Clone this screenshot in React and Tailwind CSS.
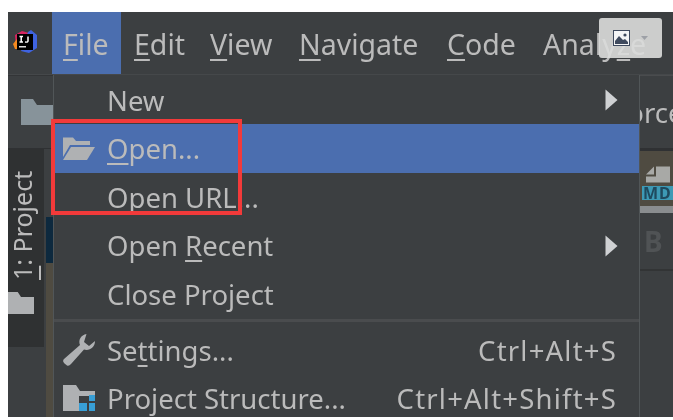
const font = { fontFamily: '"Noto Sans", sans-serif' };

function U({ children }) {
  return <span className="underline decoration-[1.5px] underline-offset-[4px]">{children}</span>;
}

function MenuTop({ children, active, width, pad }) {
  return (
    <div className={`flex h-[62px] items-center whitespace-nowrap pt-[2px] ${pad} ${width} ${active ? "bg-[#4b6eaf]" : ""}`}>
      <span>{children}</span>
    </div>
  );
}

function Row({ icon, children, shortcut, arrow, active, height = "h-[49px]", nudge = "" }) {
  return (
    <div className={`flex ${height} items-center pr-[22px] ${active ? "bg-[#4b6eaf]" : ""}`}>
      <div className="flex w-[53px] shrink-0 items-center justify-center pr-[4px]">{icon}</div>
      <div className={`flex-1 whitespace-nowrap ${nudge}`}>{children}</div>
      {shortcut && <div className={`whitespace-nowrap tracking-[1.2px] ${nudge}`}>{shortcut}</div>}
      {arrow && (
        <svg width="13" height="22" viewBox="0 0 13 22" className="mr-[-1px]">
          <path d="M0.5 0.5 L12.5 11 L0.5 21.5 Z" fill="#cfd1d3" />
        </svg>
      )}
    </div>
  );
}

function Logo() {
  return (
    <svg width="26" height="26" viewBox="0 0 26 26">
      <path d="M3 6 L10 2 L17 4 L12 22 L4 19 Z" fill="#d6245f" />
      <path d="M1 15 L5 10 L8 20 L3 20 Z" fill="#f58a1f" />
      <path d="M16 3 L19 1 L25 6 L25 19 L17 24 L9 22 Z" fill="#3f63e0" />
      <rect x="5" y="5" width="16" height="16" fill="#000" />
      <rect x="7" y="17" width="7" height="1.5" fill="#ddd" />
      <path d="M7.5 7.5 H11 M9.2 7.5 V13 M7.5 13 H11 M16 7.5 V12 Q16 13.5 13 13" stroke="#fff" strokeWidth="1.5" fill="none" />
    </svg>
  );
}

function FolderOpen() {
  return (
    <svg width="34" height="24" viewBox="0 0 34 24">
      <path d="M1 0.5 H11 L14 4 H28 V8 H8 L1 20 Z" fill="#afb1b3" />
      <path d="M9 10 H33 L25 23 H1 Z" fill="#afb1b3" />
    </svg>
  );
}

function Wrench() {
  return (
    <svg width="34" height="34" viewBox="0 0 34 34">
      <path d="M24.5 1 C19 2 16 7 18 12 L2 26 Q0 28 2.5 30.5 L5 32.5 Q7 33.5 9 31 L22 16.5 C27 18 33 15 33 8 L27 13 L22 9 Z" fill="#afb1b3" />
    </svg>
  );
}

function StructureIcon() {
  return (
    <svg width="34" height="28" viewBox="0 0 34 28">
      <path d="M1 0 H14 L18 6 H33 V11 H17 V26 H1 Z" fill="#afb1b3" />
      <rect x="17" y="18" width="8" height="8" fill="#389fd6" />
      <rect x="27" y="18" width="6" height="8" fill="#389fd6" />
      <rect x="27" y="10" width="6" height="6" fill="#389fd6" />
    </svg>
  );
}

function SolidFolder({ w, h, fill }) {
  return (
    <svg width={w} height={h} viewBox="0 0 32 26" preserveAspectRatio="none">
      <path d="M0 0 H12 L16 6 H32 V26 H0 Z" fill={fill} />
    </svg>
  );
}

export default function App() {
  return (
    <div className="relative h-[417px] w-[673px] overflow-hidden bg-white pl-2 pt-3 text-[27.5px] leading-none text-[#bbbbbb] blur-[0.4px]" style={font}>
      <div className="flex h-[405px] flex-col bg-[#3c3f41]">
        <div className="flex h-[63px] shrink-0 border-b border-[#45484a] text-[28.5px]">
          <div className="flex w-[44px] items-center pb-[3px] pl-[4px]"><Logo /></div>
          <MenuTop active width="w-[69px]" pad="pl-[11px]"><U>F</U>ile</MenuTop>
          <MenuTop width="w-[76px]" pad="pl-[13px]"><U>E</U>dit</MenuTop>
          <MenuTop width="w-[88px]" pad="pl-[13px]"><U>V</U>iew</MenuTop>
          <MenuTop width="w-[147px]" pad="pl-[14px]"><U>N</U>avigate</MenuTop>
          <MenuTop width="w-[97px]" pad="pl-[15px]"><U>C</U>ode</MenuTop>
          <MenuTop width="w-[115px]" pad="pl-[14px]">Analy<U>z</U>e</MenuTop>
        </div>
        <div className="flex min-h-0 flex-1">
          <div className="flex w-[45px] shrink-0 flex-col">
            <div className="flex h-[74px] shrink-0 items-center justify-end border-y border-t-[#333537] border-b-[#2f3133]">
              <div className="w-[32px] overflow-hidden"><SolidFolder w={32} h={26} fill="#87939a" /></div>
            </div>
            <div className="flex flex-1">
              <div className="flex h-[198px] w-[36px] flex-col bg-[#2f3132]">
                <div className="ml-[1px] mt-[20px] flex h-[112px] w-[27px] items-center justify-center rotate-180 whitespace-nowrap text-[25px] [writing-mode:vertical-rl]">
                  <span><U>1</U>: Project</span>
                </div>
                <div className="mt-[11px]"><SolidFolder w={26} h={22} fill="#afb1b3" /></div>
              </div>
              <div className="ml-[2px] flex flex-1 flex-col">
                <div className="h-[68px] bg-[#3c3f41]"></div>
                <div className="h-[46px] bg-[#0d293e]"></div>
                <div className="flex-1 bg-[#4f4b41]"></div>
              </div>
            </div>
          </div>
          <div className="w-[587px] shrink-0 border-l border-r border-[#515658] bg-[#3c3f41] pt-[1px]">
            <Row arrow height="h-[48px]" nudge="pt-[2px]">New</Row>
            <Row active icon={<FolderOpen />}><U>O</U>pen...</Row>
            <Row>Open URL...</Row>
            <Row arrow height="h-[47px]">Open <U>R</U>ecent</Row>
            <Row nudge="pt-[2px]">Close Project</Row>
            <div className="mb-[4px] mt-[1px] h-[3px] bg-[#4a4c4e]"></div>
            <Row icon={<Wrench />} shortcut="Ctrl+Alt+S" height="h-[48px]" nudge="pt-[2px]">Se<U>t</U>tings...</Row>
            <Row icon={<StructureIcon />} shortcut="Ctrl+Alt+Shift+S">Project Structure...</Row>
          </div>
          <div className="flex min-w-0 flex-1 flex-col overflow-hidden">
            <div className="flex h-[73px] shrink-0 items-center overflow-hidden whitespace-nowrap border-t border-[#4a4c4e] pt-[2px]">
              <span className="ml-[-27px]">Force</span>
            </div>
            <div className="h-[3px] shrink-0 bg-[#2f3133]"></div>
            <div className="flex h-[55px] shrink-0 flex-col items-start justify-end bg-[#4f4b41] pb-[6px] pl-[2px]">
              <svg width="24" height="17" viewBox="0 0 24 16" className="ml-[4px]">
                <path d="M8 0 V8 H0 Z M10 0 H24 V16 H0 V10 H10 Z" fill="#a8a9a6" />
              </svg>
              <div className="mt-[3px] h-[14px] w-full bg-[#3d9ab5] pl-[1px] text-[16px] font-bold leading-[14px] tracking-[1px] text-[#1f4a5e]">MD</div>
            </div>
            <div className="h-[7px] shrink-0 bg-[#8a8d8f]"></div>
            <div className="flex h-[58px] shrink-0 items-center border-b-2 border-[#323435] pl-[4px] text-[28px] font-bold text-[#505355]">B</div>
          </div>
        </div>
      </div>

      <div className="absolute left-[599px] top-[18px] flex h-[40px] w-[63px] items-center gap-[11px] rounded-[3px] bg-[#dcdddc]/90 pl-[14px]">
        <svg width="17" height="16" viewBox="0 0 17 16">
          <rect x="0.5" y="0.5" width="16" height="15" fill="#f4f5f6" stroke="#3f4a5e" />
          <path d="M2 14 V11 L6 6 L10 10 L12 9 L15 12 V14 Z" fill="#3f4a5e" />
          <circle cx="12" cy="5" r="1.6" fill="#3f4a5e" />
        </svg>
        <svg width="7" height="4" viewBox="0 0 7 4"><path d="M0 0 H7 L3.5 4 Z" fill="#9da0a6" /></svg>
      </div>

      <div className="absolute left-[51px] top-[119px] h-[96px] w-[191px] border-[4px] border-[#f23a3a]"></div>
    </div>
  );
}
